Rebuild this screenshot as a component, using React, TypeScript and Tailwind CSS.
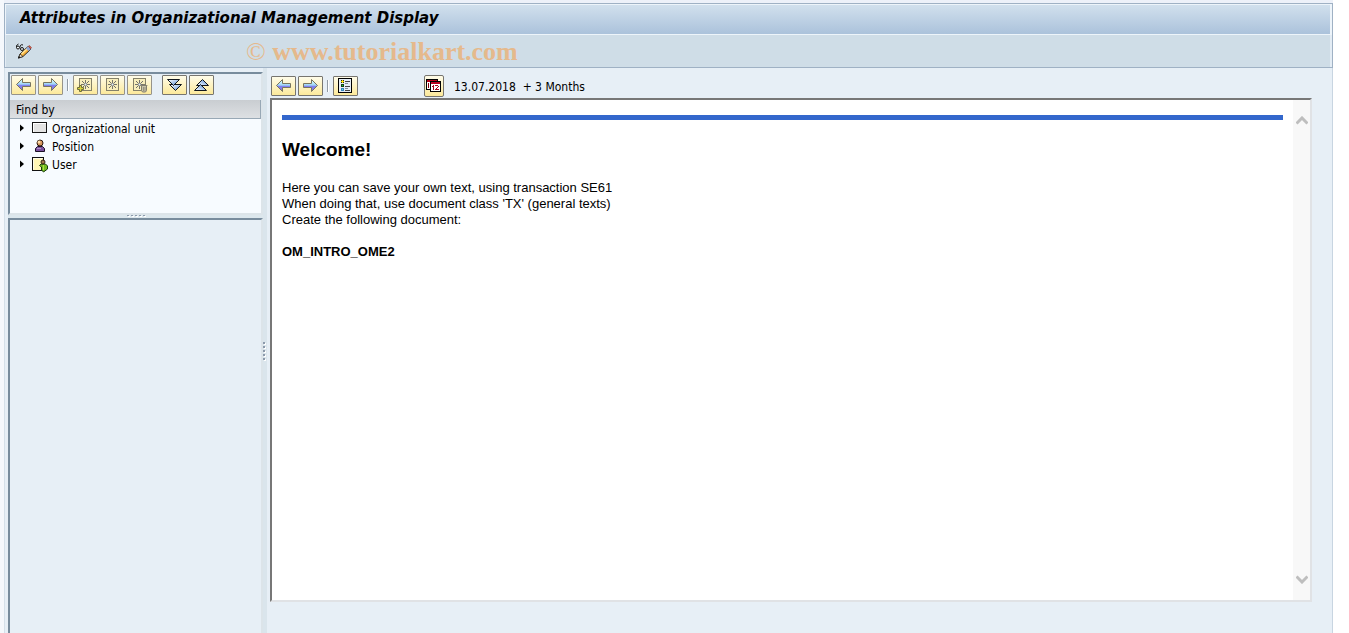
import React from "react";

type IconProps = { className?: string };

const uiFont = "font-['DejaVu_Sans_Condensed','DejaVu_Sans',sans-serif]";

function Arrow({ back = false }: { back?: boolean }) {
  const id = back ? "arrow-back" : "arrow-next";
  return (
    <svg width="17" height="16" viewBox="0 0 17 16" className={back ? "" : "-scale-x-100"} aria-hidden="true">
      <defs>
        <linearGradient id={id} x1="0" y1="0" x2="0" y2="1">
          <stop offset="0.2" stopColor="#c9f4fb" />
          <stop offset="0.48" stopColor="#9fd3f5" />
          <stop offset="0.55" stopColor="#7f80f0" />
          <stop offset="1" stopColor="#8c78dc" />
        </linearGradient>
      </defs>
      <path d="M1.5 7.5 L7.5 1.5 V5.5 H15.5 V9.5 H7.5 V13.5 Z" fill={`url(#${id})`} stroke="#77745f" strokeWidth="1" />
    </svg>
  );
}

function Spark({ kind }: { kind: "add" | "plain" | "remove" }) {
  return (
    <svg width="17" height="16" viewBox="0 0 17 16" aria-hidden="true">
      <rect x="2.5" y="1.5" width="12" height="12" fill="#f8eebb" stroke="#858169" shapeRendering="crispEdges" />
      <path d="M8.500 3v9M4 7.500h9" stroke="#75736b" fill="none" />
      <path d="M5 4l7 7M12 4l-7 7" stroke="#6f6e68" fill="none" />
      <rect x="7.500" y="6.500" width="2" height="2" fill="#e6f2f6" />
      {kind === "add" && (
        <path d="M2.500 8.500h2v2h2v2h-2v2h-2v-2h-2v-2h2z" fill="#d8d43c" stroke="#6f6e3a" />
      )}
      {kind === "remove" && (
        <g stroke="#827e6e" fill="#c9c4aa">
          <path d="M10.500 8.500h5v5l-1 1.500h-3l-1-1.500z" />
          <path d="M9.500 8.500h7M12.500 10v4M14 10v4" strokeWidth="0.700" />
          <path d="M12 7.500h2" />
        </g>
      )}
    </svg>
  );
}

function DoubleTriangle({ up = false }: { up?: boolean }) {
  const id = up ? "collapse-fill" : "expand-fill";
  return (
    <svg width="17" height="16" viewBox="0 0 17 16" className={up ? "-scale-y-100" : ""} aria-hidden="true">
      <defs>
        <linearGradient id={id} x1="0" y1="0" x2="1" y2="1">
          <stop offset="0.1" stopColor="#f4f9ff" />
          <stop offset="0.8" stopColor="#6f9fde" />
        </linearGradient>
      </defs>
      <path d="M3.500 7.500H15.500L9.500 13.500z" fill={`url(#${id})`} stroke="#10151c" />
      <path d="M1.500 2.500H13.500L7.500 8.500z" fill={`url(#${id})`} stroke="#10151c" />
    </svg>
  );
}

function ListIcon() {
  return (
    <svg width="15" height="16" viewBox="0 0 15 16" shapeRendering="crispEdges" aria-hidden="true">
      <rect x="0.5" y="0.5" width="13" height="14" fill="#e6eef7" stroke="#000" />
      <path d="M7 3.500h5M7 8.500h5M7 12.500h5" stroke="#444" />
      <path d="M7 5.500h3M7 10.500h3" stroke="#7f8b98" />
      <rect x="3" y="2" width="3" height="3" fill="#ffe600" />
      <path d="M3 2h1v1h-1zM5 2h1v1h-1zM3 4h1v1h-1zM5 4h1v1h-1z" fill="#222" />
      <rect x="3" y="6" width="3" height="3" fill="#173c1b" />
      <rect x="4" y="7" width="1" height="1" fill="#18dd35" />
      <rect x="3" y="10" width="3" height="3" fill="#3585ba" />
      <rect x="4" y="11" width="1" height="1" fill="#65dcff" />
    </svg>
  );
}

function CalendarIcon() {
  return (
    <svg width="16" height="16" viewBox="0 0 16 16" shapeRendering="crispEdges" aria-hidden="true">
      <rect x="0.500" y="1.500" width="11" height="10" fill="#fff" stroke="#000" />
      <path d="M1 2h10v2H1z" fill="#b50018" />
      <path d="M2 5h1v5H2z" fill="#850010" />
      <rect x="4.500" y="3.500" width="10" height="10" fill="#fff" stroke="#000" />
      <path d="M5 4h9v2H5z" fill="#b8001f" />
      <path d="M7 7h1v5H7zM6 8h1v1H6zM9 7h3v1H9zM12 8h1v1h-1zM11 9h1v1h-1zM10 10h1v1h-1zM9 11h4v1H9z" fill="#a9001b" />
    </svg>
  );
}

function DisplayChange() {
  return (
    <svg width="18" height="17" viewBox="0 0 18 17" aria-hidden="true">
      <path d="M1.500 4.500v-2l2-1.500M5 4.500c0-2 1-3.500 3-2.500" fill="none" stroke="#151515" />
      <circle cx="3" cy="4.500" r="1.500" fill="#eaf2f8" stroke="#151515" />
      <circle cx="7" cy="6" r="1.500" fill="#eaf2f8" stroke="#151515" />
      <path d="M3.500 15 5 11 13 3.500l3 2.500-8 7.500z" fill="#f8b13a" stroke="#332b22" />
      <path d="m6.500 11 6-5.500" stroke="#ffe69a" strokeWidth="1.500" />
      <path d="m11 5.500 2-2 3 2.500-2.500 2z" fill="#91a8da" />
      <path d="m13.500 3 1-.500 2 2-1 1.500z" fill="#e05b48" stroke="#773e39" strokeWidth="0.500" />
      <path d="m5 11-1.500 4 4.500-1.500z" fill="#f4dfc4" stroke="#222" strokeWidth="0.700" />
      <path d="m3 15.500 1-2.500 1.500 1.500z" fill="#111" />
    </svg>
  );
}

function UnitIcon() {
  return (
    <svg width="16" height="16" viewBox="0 0 16 16" shapeRendering="crispEdges" aria-hidden="true">
      <rect x="0.500" y="1.500" width="14" height="10" fill="#e3e3e3" stroke="#171717" />
      <path d="M1 2.500h13M1.500 2v9" stroke="#fff" />
    </svg>
  );
}

function PersonIcon() {
  return (
    <svg width="16" height="16" viewBox="0 0 16 16" aria-hidden="true">
      <path d="M3.500 12.500v-3l2-2h5l2 2v3z" fill="#79519e" stroke="#1c1025" />
      <path d="M5 9.500h4" stroke="#b393ca" />
      <circle cx="8" cy="4" r="3" fill="#d5945c" stroke="#291710" />
      <circle cx="7" cy="3" r="1.500" fill="#ffdda8" />
    </svg>
  );
}

function UserIcon() {
  return (
    <svg width="16" height="16" viewBox="0 0 16 16" aria-hidden="true">
      <path d="M0.500 0.500h11v13H.5z" fill="#fff6b5" stroke="#111" shapeRendering="crispEdges" />
      <path d="M1.500 12.500v-11h9" fill="none" stroke="#fffde8" />
      <path d="M7.500 8.500 9 7h4.500l2 2v3l-4 3-2-2v-3z" fill="#72bb22" stroke="#173b0d" />
      <path d="M11.500 8v5" stroke="#aee444" />
      <circle cx="11" cy="5" r="2" fill="#a1784c" stroke="#342416" />
    </svg>
  );
}

function ToolButton({ label, children, muted = false }: { label: string; children: React.ReactNode; muted?: boolean }) {
  return (
    <button
      type="button"
      aria-label={label}
      className={`flex h-5 w-[25px] shrink-0 items-center justify-center rounded-[1px] border bg-linear-to-b from-[#fffce9] to-[#fce99a] ${muted ? "border-[#96938a]" : "border-[#77756f]"}`}
    >
      {children}
    </button>
  );
}

function Separator() {
  return <div className="h-3 w-[2px] shrink-0 border-r border-l border-r-white border-l-[#929ba5]" />;
}

function TreeItem({ label, icon }: { label: string; icon: React.ReactNode }) {
  return (
    <li className="flex h-[18px] items-center">
      <button type="button" className="flex items-center">
        <svg width="5" height="8" viewBox="0 0 5 8" className="mr-[7px] mb-[2px] ml-[10px]" aria-hidden="true">
          <path d="M0 0.500 4 4 0 7.500z" fill="#000" />
        </svg>
        {icon}
        <span className="ml-1 text-[12px] leading-[18px] whitespace-nowrap">{label}</span>
      </button>
    </li>
  );
}

function Grip({ vertical = false }: { vertical?: boolean }) {
  return (
    <div className={`flex gap-[2px] ${vertical ? "flex-col" : ""}`}>
      {[0, 1, 2, 3, 4].map((n) => (
        <i
          key={n}
          className={`block w-[2px] bg-[#8c9aab] shadow-[1px_1px_0_#fff] ${vertical ? "h-[2px]" : "h-px"}`}
        />
      ))}
    </div>
  );
}

function Chevron({ className = "" }: IconProps) {
  return (
    <svg width="12" height="9" viewBox="0 0 12 9" className={className} aria-hidden="true">
      <path d="M0.500 7.500 6 2 11.500 7.500" fill="none" stroke="#bebebe" strokeWidth="3" />
    </svg>
  );
}

export default function App() {
  return (
    <div className={`flex min-h-screen bg-white text-black ${uiFont}`}>
      <div className="w-1 shrink-0 bg-[#f5f8fc]" />
      <div className="mr-4 flex min-w-0 flex-1 flex-col border-t-[3px] border-[#edf1f9]">
        <header className="border border-[#9fb1c4] bg-[#cfdde7]">
          <div className="flex h-[31px] items-center border-t border-r-2 border-b border-l border-[#edf4fa] bg-linear-to-b from-[#d1e0ed] to-[#abc2db] pl-[14px]">
            <h1 className="-mt-1 font-['DejaVu_Sans',sans-serif] text-[15px] leading-5 font-bold whitespace-nowrap italic">
              Attributes in Organizational Management Display
            </h1>
          </div>
          <div className="flex h-8 items-center border-r-2 border-l border-[#e3ecf4] pl-[9px]">
            <button type="button" aria-label="Display or change">
              <DisplayChange />
            </button>
            <p className="ml-[213px] pt-px font-['Liberation_Serif',serif] text-[26px] leading-8 whitespace-nowrap text-[#e5b98c]">
              © <span className="font-bold">www.tutorialkart.com</span>
            </p>
          </div>
        </header>

        <main className="flex flex-1 border-r border-l border-r-[#c8d5e1] border-l-[#d5e0e9] bg-[#e7eff6] pl-[3px]">
          <aside className="flex w-[255px] shrink-0 flex-col pt-1">
            <section className="border-t-2 border-r-2 border-b-2 border-l-2 border-t-[#788c9d] border-r-[#dce4e9] border-b-[#dce4e9] border-l-[#788c9d] bg-[#f7fbff]">
              <div className="flex h-[26px] items-start gap-[2px] bg-[#e7eff6] pt-px pl-px">
                <ToolButton label="Back" muted><Arrow back /></ToolButton>
                <ToolButton label="Forward" muted><Arrow /></ToolButton>
                <div className="mx-[2px] mt-1"><Separator /></div>
                <ToolButton label="Add to search" muted><Spark kind="add" /></ToolButton>
                <ToolButton label="Search variant" muted><Spark kind="plain" /></ToolButton>
                <ToolButton label="Delete search variant" muted><Spark kind="remove" /></ToolButton>
                <div className="w-[6px]" />
                <ToolButton label="Expand all"><DoubleTriangle /></ToolButton>
                <ToolButton label="Collapse all"><DoubleTriangle up /></ToolButton>
              </div>
              <h2 className="h-[19px] border-r border-b border-[#98a8b5] bg-linear-to-b from-[#c9cdd1] to-[#dde0e3] pl-[6px] text-[12px] leading-5">
                Find by
              </h2>
              <ul className="h-[94px] pt-px">
                <TreeItem label="Organizational unit" icon={<UnitIcon />} />
                <TreeItem label="Position" icon={<PersonIcon />} />
                <TreeItem label="User" icon={<UserIcon />} />
              </ul>
            </section>
            <div className="flex h-[3px] items-start justify-center bg-[#dce7ed]"><Grip /></div>
            <section className="flex-1 border-t-2 border-r-2 border-l-2 border-t-[#788c9d] border-r-[#dce4e9] border-l-[#788c9d]" />
          </aside>

          <div className="flex w-1 shrink-0 items-center bg-[#dae5ec]"><Grip vertical /></div>

          <section className="mr-5 mb-[31px] ml-[3px] flex min-w-0 flex-1 flex-col">
            <div className="flex h-[30px] shrink-0 items-center gap-[2px] pt-[6px] pl-px">
              <ToolButton label="Previous"><Arrow back /></ToolButton>
              <ToolButton label="Next"><Arrow /></ToolButton>
              <div className="mx-[2px]"><Separator /></div>
              <ToolButton label="Show layout"><ListIcon /></ToolButton>
              <button
                type="button"
                aria-label="Choose period"
                className="ml-16 flex h-[22px] w-5 items-center justify-center rounded-[2px] border border-[#77756f] bg-linear-to-b from-[#fffce9] to-[#fce99a]"
              >
                <CalendarIcon />
              </button>
              <p className="ml-2 pt-[2px] text-[12px] leading-4 whitespace-pre">13.07.2018  + 3 Months</p>
            </div>
            <div className="flex flex-1 border-t-2 border-r-2 border-b-2 border-l-2 border-t-[#777] border-r-[#e0e2e5] border-b-[#e0e2e5] border-l-[#777] bg-white">
              <article className="min-w-0 flex-1 px-[10px] pt-[15px] font-['Liberation_Sans',sans-serif] text-[13px] leading-4">
                <hr className="h-[5px] border-0 bg-[#3367cc]" />
                <h2 className="mt-[18px] text-[19px] leading-6 font-bold">Welcome!</h2>
                <p className="mt-[18px]">
                  Here you can save your own text, using transaction SE61<br />
                  When doing that, use document class 'TX' (general texts)<br />
                  Create the following document:
                </p>
                <p className="mt-4 font-bold">OM_INTRO_OME2</p>
              </article>
              <div className="flex w-[17px] shrink-0 flex-col items-center justify-between bg-[#f8f8f8] py-4">
                <button type="button" aria-label="Scroll up"><Chevron /></button>
                <button type="button" aria-label="Scroll down"><Chevron className="rotate-180" /></button>
              </div>
            </div>
          </section>
        </main>
      </div>
    </div>
  );
}
